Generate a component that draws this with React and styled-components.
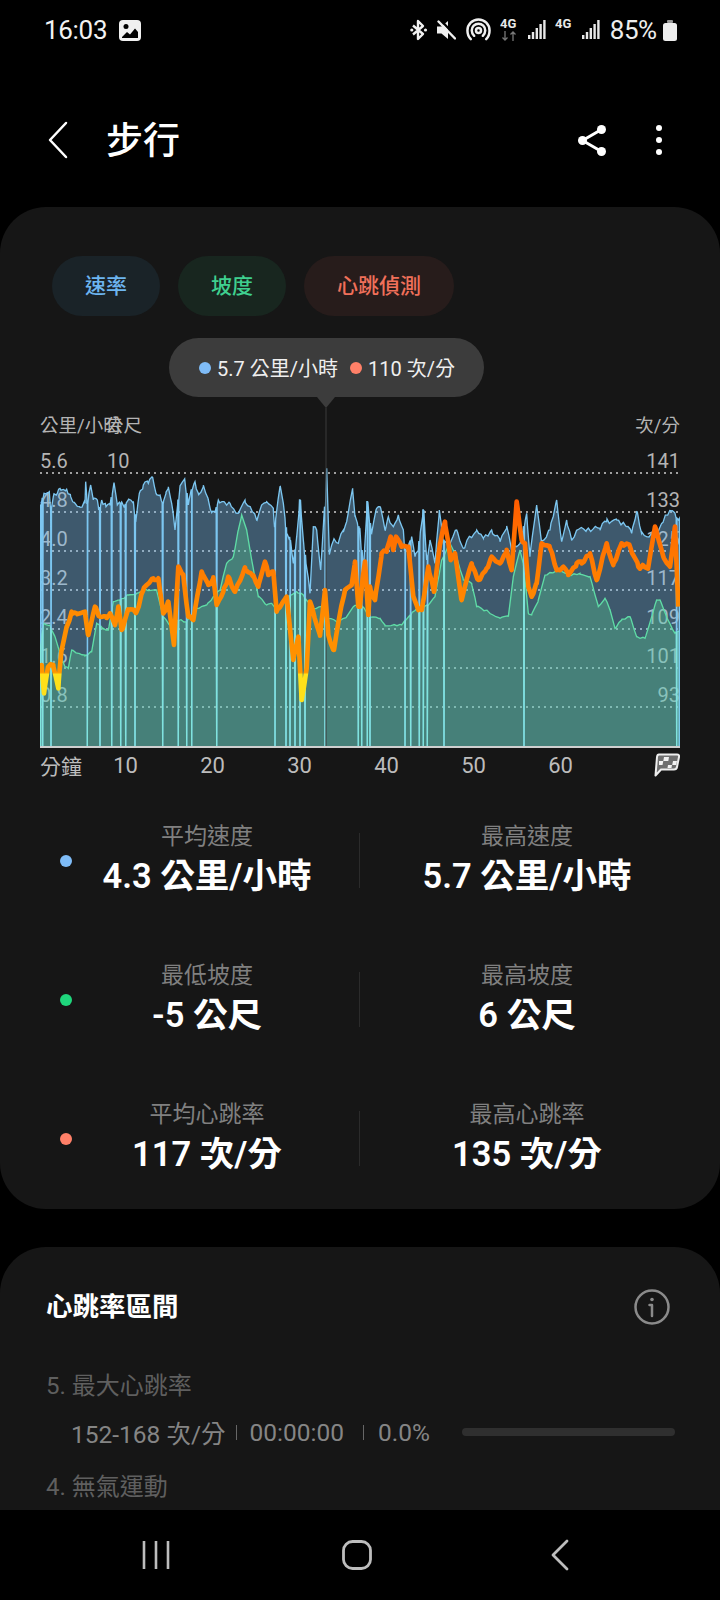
import React from 'react';
import styled, { createGlobalStyle } from 'styled-components';

const GlobalStyle = createGlobalStyle`
  html, body { margin: 0; padding: 0; background: #000; }
  * { box-sizing: border-box; }
`;

const FONT = `Roboto, "Noto Sans CJK TC", sans-serif`;

// chart traces, traced in 3x px: x 120 = left edge of plot, y 0 = page y 330
const BLUE_L = [[120,530],[125,520],[132,490],[148,485],[152,540],[160,500],[172,490],[180,475],[200,478],[212,500],[225,520],[240,532],[255,520],[257,455],[262,520],[272,465],[280,510],[292,510],[296,540],[305,510],[318,530],[330,520],[342,458],[352,525],[360,520],[375,525],[385,510],[400,520],[408,570],[418,490],[430,465],[445,460],[458,442],[468,490],[480,495],[490,520],[498,490],[505,475],[515,520],[525,600],[540,470],[553,448],[565,525],[575,480],[585,455],[595,490],[610,470],[625,510],[635,548],[645,545],[655,510],[670,515],[690,520],[715,550],[735,510],[750,530],[770,570],[785,525],[800,515],[820,535],[825,590],[840,470],[850,520],[860,610],[870,630],[880,700],[890,620],[900,510],[910,630],[930,790],[940,590],[950,600],[962,720],[975,530],[980,415],[988,670],[1000,632],[1015,640],[1030,600],[1040,575],[1058,475],[1065,560],[1080,600]];
const BLUE_R = [[10,730],[22,515],[35,610],[50,535],[60,530],[75,600],[85,560],[100,590],[115,555],[130,600],[135,660],[155,620],[165,680],[175,660],[190,540],[200,690],[210,630],[225,700],[238,540],[250,640],[270,640],[290,600],[310,655],[330,620],[350,600],[370,625],[395,600],[420,635],[440,595],[455,660],[470,650],[480,640],[500,550],[510,680],[530,525],[545,640],[570,600],[590,510],[605,635],[620,570],[635,630],[650,600],[680,600],[720,595],[740,575],[770,570],[800,590],[815,610],[830,545],[845,610],[860,620],[885,610],[905,580],[930,540],[945,550],[955,570],[960,560]];
const GREEN_L = [[120,950],[130,880],[150,885],[165,920],[180,970],[195,1010],[205,1015],[215,960],[235,970],[255,975],[275,965],[290,880],[310,895],[325,900],[340,815],[360,810],[385,795],[410,790],[430,780],[470,780],[490,860],[510,885],[530,870],[560,875],[590,835],[620,825],[640,800],[660,780],[680,700],[700,680],[715,600],[725,555],[740,600],[755,690],[775,800],[800,825],[815,820],[830,845],[860,805],[890,785],[910,795],[940,835],[970,830],[985,865],[1010,875],[1040,860],[1060,830],[1080,820]];
const GREEN_R = [[30,860],[60,865],[75,885],[100,885],[125,885],[135,870],[155,850],[175,830],[205,825],[225,800],[245,690],[270,640],[290,680],[310,750],[335,760],[350,830],[385,845],[420,865],[445,860],[460,740],[480,660],[490,700],[505,850],[515,855],[535,810],[555,735],[585,725],[600,720],[625,735],[660,730],[690,740],[715,830],[735,805],[750,840],[765,895],[785,870],[810,860],[830,920],[855,925],[875,860],[890,810],[900,810],[920,860],[945,910],[958,905]];
const HEART_L = [[120,1040],[125,1005],[132,1090],[145,1010],[160,1005],[175,1075],[178,1030],[185,960],[200,890],[215,845],[230,850],[255,845],[265,915],[285,830],[300,860],[320,860],[330,850],[345,885],[355,830],[365,900],[385,840],[410,845],[430,780],[460,745],[475,745],[490,850],[505,815],[522,945],[535,710],[550,735],[565,860],[580,870],[605,725],[625,765],[640,745],[650,825],[670,785],[685,740],[705,785],[735,712],[760,740],[775,770],[795,695],[805,735],[820,725],[830,845],[860,800],[880,990],[895,920],[905,1110],[920,1015],[930,815],[960,915],[975,780],[985,915],[1002,960],[1020,850],[1035,780],[1055,765],[1065,695],[1075,830],[1080,830]];
const HEART_R = [[0,810],[15,695],[25,855],[30,770],[45,810],[65,670],[80,665],[92,620],[100,660],[108,620],[125,650],[145,650],[160,800],[175,840],[185,840],[205,710],[222,785],[240,640],[255,575],[272,690],[285,670],[305,810],[320,750],[335,700],[355,750],[380,715],[395,680],[420,700],[440,665],[455,720],[470,515],[485,630],[495,640],[505,770],[515,800],[530,760],[545,640],[570,655],[590,720],[610,710],[625,735],[650,700],[665,700],[690,670],[710,750],[740,640],[760,705],[785,640],[810,650],[835,710],[865,710],[885,590],[910,680],[930,710],[945,590],[955,830]];

const DROPS = [122,128,153,262,300,335,362,377,405,488,535,560,575,650,825,858,870,885,900,915,975,1075,1085,1102,1110,1215,1232,1258,1270,1282,1332,1572,2030,2038];

const BASE = 1252;
const join = (left, right) => [...left, ...right.map(([x, y]) => [x + 1080, y])];

const heightAt = (pts, x) => {
  const i = pts.findIndex((p) => p[0] >= x);
  if (i <= 0) return pts[Math.max(i, 0)][1];
  const [x0, y0] = pts[i - 1];
  const [x1, y1] = pts[i];
  return y0 + ((y1 - y0) * (x - x0)) / (x1 - x0);
};

// the sensor traces are noisy, add small repeatable wiggle between traced points
const roughen = (pts, step, amount) => {
  const out = [];
  for (let x = pts[0][0]; x < pts[pts.length - 1][0]; x += step) {
    const wiggle = Math.sin(x * 12.9898) * 43758.5453;
    out.push([x, heightAt(pts, x) + (wiggle - Math.floor(wiggle) - 0.5) * amount]);
  }
  return [...pts, ...out].sort((a, b) => a[0] - b[0]);
};

const withDrops = (pts) => {
  const out = [...pts];
  DROPS.forEach((x) => {
    const y = heightAt(pts, x);
    out.push([x - 1.5, y], [x, BASE], [x + 1.5, y]);
  });
  return out.sort((a, b) => a[0] - b[0]);
};

const toD = (pts) => pts.map(([x, y], i) => `${i ? 'L' : 'M'}${x} ${y}`).join(' ');
const toArea = (pts) => `${toD(pts)} L${pts[pts.length - 1][0]} ${BASE} L${pts[0][0]} ${BASE} Z`;

const bluePts = withDrops(roughen(join(BLUE_L, BLUE_R), 7, 16));
const greenPts = roughen(join(GREEN_L, GREEN_R), 9, 6);
const heartPts = roughen(join(HEART_L, HEART_R), 8, 12);

const Page = styled.div`
  width: 720px;
  height: 1600px;
  background: #000;
  display: flex;
  flex-direction: column;
  overflow: hidden;
  font-family: ${FONT};
  color: #fff;
`;

const StatusBar = styled.div`
  height: 60px;
  padding: 0 43px 0 44px;
  display: flex;
  align-items: center;
  justify-content: space-between;
`;

const StatusGroup = styled.div`
  display: flex;
  align-items: center;
  gap: ${(p) => p.$gap}px;
`;

const Time = styled.span`
  font-size: 26px;
  color: #f2f2f2;
  letter-spacing: -0.3px;
`;

const Percent = styled.span`
  font-size: 26px;
  color: #ededed;
  letter-spacing: -0.5px;
  margin-right: -3px;
`;

const Header = styled.div`
  height: 80px;
  margin: 40px 0 27px;
  padding: 0 58px 0 46px;
  display: flex;
  align-items: center;
`;

const Title = styled.h1`
  margin: 0 0 4px 36px;
  font-size: 37px;
  font-weight: 500;
  flex: 1;
`;

const HeaderIcons = styled.div`
  display: flex;
  align-items: center;
  gap: 50px;
`;

const Card = styled.section`
  background: #161616;
  border-radius: 46px;
`;

const ChartCard = styled(Card)`
  height: 1002px;
  padding-top: 49px;
`;

const Chips = styled.div`
  display: flex;
  gap: 18px;
  padding-left: 52px;
`;

const Chip = styled.div`
  height: 60px;
  padding: 0 33px 4px;
  border-radius: 30px;
  display: flex;
  align-items: center;
  font-size: 21px;
  font-weight: 500;
  color: ${(p) => p.$color};
  background: ${(p) => p.$bg};
`;

const ChartArea = styled.div`
  position: relative;
  margin: 22px 40px 0;
  height: 410px;
`;

const Tooltip = styled.div`
  position: absolute;
  left: 129px;
  top: 0;
  width: 315px;
  height: 59px;
  border-radius: 30px;
  background: #3c3c3c;
  display: flex;
  align-items: center;
  padding-left: 30px;
  gap: 6px;
  font-size: 20px;
  color: #efefef;
  z-index: 2;

  &::after {
    content: '';
    position: absolute;
    left: 148px;
    top: 59px;
    border-left: 9px solid transparent;
    border-right: 9px solid transparent;
    border-top: 11px solid #3c3c3c;
  }
`;

const Dot = styled.i`
  display: block;
  flex: none;
  width: ${(p) => p.$size}px;
  height: ${(p) => p.$size}px;
  border-radius: 50%;
  background: ${(p) => p.$color};
`;

const TipValue = styled.span`
  margin-right: 6px;
`;

const Grid = styled.div`
  position: absolute;
  left: 0;
  right: 0;
  top: 67px;
`;

const UnitRow = styled.div`
  height: 30px;
  padding-top: 6px;
  position: relative;
  display: flex;
  justify-content: space-between;
  align-items: flex-start;
  font-size: 18.5px;
  color: #b4b4b4;
`;

const OverlapUnit = styled.span`
  position: absolute;
  left: 65px;
`;

const GridRow = styled.div`
  height: 39px;
  padding-bottom: 2px;
  background: repeating-linear-gradient(90deg, #a0a0a0 0 2px, transparent 2px 6px) bottom / 100% 2px no-repeat;
  display: flex;
  align-items: flex-end;
  font-size: 20px;
  line-height: 22px;
  color: #b4b4b4;
`;

const FirstCol = styled.span`
  width: 67px;
`;

const RightCol = styled.span`
  margin-left: auto;
`;

const Plot = styled.svg`
  position: absolute;
  left: 0;
  bottom: 0;
  width: 640px;
  height: 344px;
  display: block;
`;

const AxisRow = styled.div`
  margin: 5px 40px 0;
  height: 24px;
  display: flex;
  align-items: center;
  font-size: 22px;
  color: #bcbcbc;
`;

const AxisUnit = styled.span`
  width: 42px;
  font-size: 21px;
`;

const Tick = styled.span`
  width: 87px;
  text-align: center;
`;

const FlagIcon = styled.svg`
  margin-left: auto;
  flex: none;
`;

const Stats = styled.div`
  margin-top: 14px;
`;

const StatRow = styled.div`
  height: 139px;
  padding-left: 60px;
  display: grid;
  grid-template-columns: 12px 270px 17px 1px 334px;
  align-items: center;
`;

const StatCell = styled.div`
  grid-column: ${(p) => p.$col};
  text-align: center;
`;

const StatLabel = styled.div`
  font-size: 23px;
  line-height: 28px;
  color: #808080;
`;

const StatValue = styled.div`
  margin-top: 3px;
  font-size: 34.5px;
  line-height: 44px;
  font-weight: 600;
`;

const StatDivider = styled.div`
  grid-column: 4;
  height: 55px;
  background: #2b2b2b;
`;

const ZoneCard = styled(Card)`
  flex: 1;
  min-height: 0;
  overflow: hidden;
  margin-top: 38px;
  border-bottom-left-radius: 0;
  border-bottom-right-radius: 0;
  padding: 35px 50px 0 46px;
`;

const ZoneHead = styled.div`
  display: flex;
  align-items: center;
  justify-content: space-between;
  height: 44px;
`;

const ZoneTitle = styled.h2`
  margin: 0;
  font-size: 26.5px;
  font-weight: 700;
`;

const InfoIcon = styled.svg`
  margin-top: 5px;
`;

const ZoneName = styled.div`
  margin-top: ${(p) => p.$top}px;
  font-size: 24px;
  line-height: 30px;
  color: #5f5f5f;
`;

const ZoneRow = styled.div`
  margin-top: 16px;
  padding-left: 25px;
  height: 30px;
  display: flex;
  align-items: center;
  font-size: 24.5px;
  color: #858585;
`;

const Sep = styled.i`
  width: 1px;
  height: 15px;
  margin: 0 ${(p) => p.$after}px 0 ${(p) => p.$before}px;
  background: #666;
`;

const ZoneBar = styled.div`
  margin-left: auto;
  margin-right: -5px;
  width: 213px;
  height: 8px;
  border-radius: 4px;
  background: #2f2f2f;
`;

const NavBar = styled.nav`
  height: 90px;
  flex: none;
  background: #000;
  display: flex;
  align-items: center;
  padding: 0 0 0 142px;
`;

const NavSlot = styled.div`
  width: ${(p) => p.$w}px;
  display: flex;
`;

const Chart = () => (
  <Plot viewBox="120 222 1920 1032" preserveAspectRatio="none">
    <defs>
      <clipPath id="greenClip">
        <path d={toArea(greenPts)} />
      </clipPath>
      <linearGradient id="heartGrad" gradientUnits="userSpaceOnUse" x1="0" y1="500" x2="0" y2="1120">
        <stop offset="0" stopColor="#ff5a00" />
        <stop offset="0.2" stopColor="#ff7000" />
        <stop offset="0.5" stopColor="#ff8800" />
        <stop offset="0.85" stopColor="#ff9500" />
        <stop offset="0.86" stopColor="#ffe01a" />
        <stop offset="1" stopColor="#ffe01a" />
      </linearGradient>
    </defs>
    <path d={toArea(bluePts)} fill="rgba(122,190,240,0.4)" />
    <path d={toArea(greenPts)} fill="rgba(90,220,150,0.3)" />
    <path d={toD(greenPts)} fill="none" stroke="#5fdca6" strokeWidth="4" />
    <path d={toD(bluePts)} fill="none" stroke="#7cc6f0" strokeWidth="4" />
    <path d={toD(bluePts)} fill="none" stroke="#80e4dc" strokeWidth="4" clipPath="url(#greenClip)" />
    <line x1="978" y1="234" x2="978" y2="1250" stroke="#3a3a3a" strokeWidth="3" />
    <path d={toD(heartPts)} fill="none" stroke="url(#heartGrad)" strokeWidth="14" strokeLinejoin="round" />
    <line x1="120" y1="1251" x2="2040" y2="1251" stroke="#cfcfcf" strokeWidth="6" />
  </Plot>
);

const NetworkIcon = ({ arrows }) => (
  <svg width="18" height="26" viewBox="0 0 18 26">
    <text x="0" y="11" fontFamily="Roboto, sans-serif" fontSize="13" fontWeight="700" fill="#e8e8e8">4G</text>
    {arrows && <path d="M5 14v9M2.500 20.500L5 23l2.500-2.500M13 24v-9M10.500 17.500L13 15l2.500 2.500" fill="none" stroke="#777" strokeWidth="1.300" />}
  </svg>
);

const SignalIcon = () => (
  <svg width="18" height="20" viewBox="0 0 18 20" fill="#e8e8e8">
    <rect x="0" y="15" width="2.400" height="4" />
    <rect x="3.800" y="12" width="2.400" height="7" />
    <rect x="7.600" y="8" width="2.400" height="11" />
    <rect x="11.400" y="4" width="2.400" height="15" />
    <rect x="15.200" y="0" width="2.400" height="19" />
  </svg>
);

const StatusIcons = () => (
  <>
    <svg width="18" height="22" viewBox="0 0 18 22" fill="none" stroke="#f0f0f0" strokeWidth="2.400" strokeLinejoin="round">
      <path d="M3 6.500l10 8.500-5 5V2l5 5-10 8.500" />
      <circle cx="1.800" cy="11" r="1.600" fill="#f0f0f0" stroke="none" />
      <circle cx="15.500" cy="11" r="1.600" fill="#f0f0f0" stroke="none" />
    </svg>
    <svg width="19" height="20" viewBox="0 0 19 20" fill="#efefef">
      <path d="M0 6.500h4.500L11 1v18l-6.500-5.500H0z" />
      <path d="M3.500 0l16 17" stroke="#000" strokeWidth="2.400" />
      <path d="M1.500 1.500l16.500 17" stroke="#efefef" strokeWidth="2.400" strokeLinecap="round" />
    </svg>
    <svg width="25" height="26" viewBox="0 0 26 26" fill="none" stroke="#efefef" strokeWidth="2.600" strokeLinecap="round">
      <path d="M5 22.500C2.500 20 1.500 17 1.500 13.500a11.500 11.500 0 0 1 23 0c0 3.500-1 6.500-3.500 9" />
      <path d="M8.500 19c-1.500-1.500-2.500-3.300-2.500-5.500a7 7 0 0 1 14 0c0 2.200-1 4-2.500 5.500" />
      <circle cx="13" cy="13.500" r="2.600" />
    </svg>
    <NetworkIcon arrows />
    <SignalIcon />
    <NetworkIcon />
    <SignalIcon />
  </>
);

const stats = [
  { color: '#7fbcf7', a: '平均速度', av: '4.3 公里/小時', b: '最高速度', bv: '5.7 公里/小時' },
  { color: '#1fd67c', a: '最低坡度', av: '-5 公尺', b: '最高坡度', bv: '6 公尺' },
  { color: '#ff8068', a: '平均心跳率', av: '117 次/分', b: '最高心跳率', bv: '135 次/分' },
];

const gridRows = [
  ['5.6', '10', '141'],
  ['4.8', '', '133'],
  ['4.0', '', '125'],
  ['3.2', '', '117'],
  ['2.4', '', '109'],
  ['1.6', '', '101'],
  ['0.8', '', '93'],
];

export default function App() {
  return (
    <Page>
      <GlobalStyle />
      <StatusBar>
        <StatusGroup $gap={12}>
          <Time>16:03</Time>
          <svg width="22" height="21" viewBox="0 0 22 21">
            <rect x="0" y="0" width="22" height="21" rx="4" fill="#f0f0f0" />
            <circle cx="7" cy="6.500" r="2.500" fill="#000" />
            <path d="M3 17l5-5 3 2.500 5-6 3 3.500V18H3z" fill="#000" />
          </svg>
        </StatusGroup>
        <StatusGroup $gap={9.4}>
          <StatusIcons />
          <Percent>85%</Percent>
          <svg width="14" height="21" viewBox="0 0 14 21" fill="#ededed">
            <rect x="4" y="0" width="6" height="3" rx="1" fill="#999" />
            <rect x="0" y="3" width="14" height="18" rx="2.500" />
          </svg>
        </StatusGroup>
      </StatusBar>

      <Header>
        <svg width="24" height="38" viewBox="0 0 24 38" fill="none" stroke="#fff" strokeWidth="2.500" strokeLinecap="round" strokeLinejoin="round">
          <path d="M20 2L4 19l16 17" />
        </svg>
        <Title>步行</Title>
        <HeaderIcons>
          <svg width="28" height="31" viewBox="0 0 28 31" fill="#fff">
            <circle cx="4.500" cy="15.500" r="4.500" />
            <circle cx="23.500" cy="4.500" r="4.500" />
            <circle cx="23.500" cy="26.500" r="4.500" />
            <path d="M4.500 15.500l19-11M4.500 15.500l19 11" stroke="#fff" strokeWidth="3" />
          </svg>
          <svg width="6" height="30" viewBox="0 0 6 30" fill="#fff">
            <circle cx="3" cy="3" r="3" />
            <circle cx="3" cy="15" r="3" />
            <circle cx="3" cy="27" r="3" />
          </svg>
        </HeaderIcons>
      </Header>

      <ChartCard>
        <Chips>
          <Chip $color="#6db5f0" $bg="#1a2328">速率</Chip>
          <Chip $color="#3fd08f" $bg="#18261f">坡度</Chip>
          <Chip $color="#f0705a" $bg="#271c1b">心跳偵測</Chip>
        </Chips>

        <ChartArea>
          <Tooltip>
            <Dot $size={12} $color="#7fbcf7" />
            <TipValue>5.7 公里/小時</TipValue>
            <Dot $size={12} $color="#ff8068" />
            <span>110 次/分</span>
          </Tooltip>
          <Grid>
            <UnitRow>
              <span>公里/小時</span>
              <OverlapUnit>公尺</OverlapUnit>
              <span>次/分</span>
            </UnitRow>
            {gridRows.map(([left, mid, right]) => (
              <GridRow key={right}>
                <FirstCol>{left}</FirstCol>
                <span>{mid}</span>
                <RightCol>{right}</RightCol>
              </GridRow>
            ))}
          </Grid>
          <Chart />
        </ChartArea>

        <AxisRow>
          <AxisUnit>分鐘</AxisUnit>
          {[10, 20, 30, 40, 50, 60].map((t) => (
            <Tick key={t}>{t}</Tick>
          ))}
          <FlagIcon width="26" height="24" viewBox="0 0 26 24" fill="none">
            <path d="M5 1.500H23Q25.500 1.500 25 4L23 14Q22.500 16.500 20 16.500H7L1.500 22.500L3 4Q3.300 1.500 5 1.500Z" fill="#6e6e6e" stroke="#eee" strokeWidth="2" strokeLinejoin="round" />
            <path d="M10 4h5l-.7 4h-5zM19 8h4l-.8 4h-4zM9.300 8H5v4h3.500zM14 12h4l-.5 3h-4z" fill="#f2f2f2" />
          </FlagIcon>
        </AxisRow>

        <Stats>
          {stats.map((s) => (
            <StatRow key={s.a}>
              <Dot $size={12} $color={s.color} />
              <StatCell $col={2}>
                <StatLabel>{s.a}</StatLabel>
                <StatValue>{s.av}</StatValue>
              </StatCell>
              <StatDivider />
              <StatCell $col={5}>
                <StatLabel>{s.b}</StatLabel>
                <StatValue>{s.bv}</StatValue>
              </StatCell>
            </StatRow>
          ))}
        </Stats>
      </ChartCard>

      <ZoneCard>
        <ZoneHead>
          <ZoneTitle>心跳率區間</ZoneTitle>
          <InfoIcon width="36" height="36" viewBox="0 0 36 36" fill="none" stroke="#8a8a8a" strokeWidth="2.500">
            <circle cx="18" cy="18" r="16.500" />
            <path d="M18 16v11M15.500 16H18" strokeLinecap="round" />
            <circle cx="18" cy="10.500" r="1.800" fill="#8a8a8a" stroke="none" />
          </InfoIcon>
        </ZoneHead>
        <ZoneName $top={45}>5. 最大心跳率</ZoneName>
        <ZoneRow>
          <span>152-168 次/分</span>
          <Sep $before={10} $after={13} />
          <span>00:00:00</span>
          <Sep $before={19} $after={14} />
          <span>0.0%</span>
          <ZoneBar />
        </ZoneRow>
        <ZoneName $top={25}>4. 無氣運動</ZoneName>
      </ZoneCard>

      <NavBar>
        <NavSlot $w={200}>
          <svg width="28" height="28" viewBox="0 0 28 28" stroke="#bdbdbd" strokeWidth="2.600">
            <path d="M2 0v28M14 0v28M26 0v28" />
          </svg>
        </NavSlot>
        <NavSlot $w={209}>
          <svg width="30" height="30" viewBox="0 0 30 30" fill="none" stroke="#bdbdbd" strokeWidth="2.800">
            <rect x="1.500" y="1.500" width="27" height="27" rx="9" />
          </svg>
        </NavSlot>
        <NavSlot $w={20}>
          <svg width="18" height="32" viewBox="0 0 18 32" fill="none" stroke="#bdbdbd" strokeWidth="2.800" strokeLinecap="round" strokeLinejoin="round">
            <path d="M16 2L2 16l14 14" />
          </svg>
        </NavSlot>
      </NavBar>
    </Page>
  );
}
